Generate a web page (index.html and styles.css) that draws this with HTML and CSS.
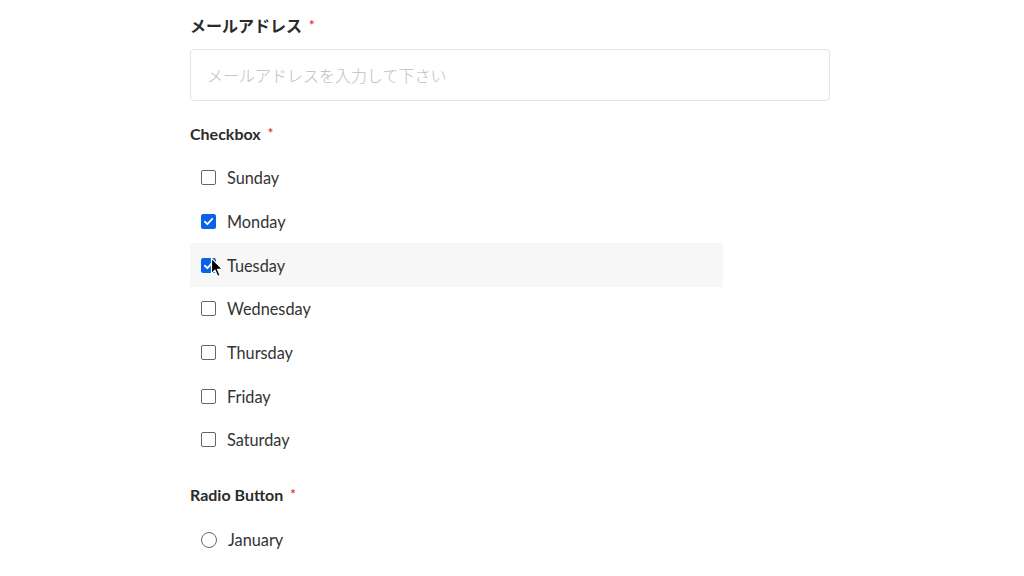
FILE: index.html
```html
<!DOCTYPE html>
<html lang="ja">
<head>
    <meta charset="UTF-8">
    <meta name="viewport" content="width=device-width, initial-scale=1.0">
    <title>Form</title>
    <link rel="stylesheet" href="styles.css">
</head>
<body>
    <form class="form">
        <div class="field field-email">
            <label class="field-label" for="email">メールアドレス<span class="req">*</span></label>
            <input class="text-input" id="email" type="email" placeholder="メールアドレスを入力して下さい">
        </div>

        <div class="field">
            <div class="field-label">Checkbox<span class="req">*</span></div>
            <div class="options">
                <label class="option"><input type="checkbox" class="box"> Sunday</label>
                <label class="option"><input type="checkbox" class="box" checked> Monday</label>
                <label class="option hover">
                    <input type="checkbox" class="box" checked> Tuesday
                    <svg class="cursor" width="14" height="21" viewBox="0 0 12 19">
                        <path d="M1 1 L1 15 L4.2 12 L6.6 17.6 L8.8 16.6 L6.5 11.2 L11 11.2 Z" fill="#000" stroke="#fff" stroke-width="1.1" stroke-linejoin="round"/>
                    </svg>
                </label>
                <label class="option"><input type="checkbox" class="box"> Wednesday</label>
                <label class="option"><input type="checkbox" class="box"> Thursday</label>
                <label class="option"><input type="checkbox" class="box"> Friday</label>
                <label class="option"><input type="checkbox" class="box"> Saturday</label>
            </div>
        </div>

        <div class="field">
            <div class="field-label">Radio Button<span class="req">*</span></div>
            <div class="options options-radio">
                <label class="option"><input type="radio" name="month" class="radio"> January</label>
            </div>
        </div>
    </form>
</body>
</html>
```

FILE: styles.css
```css
body {
    margin: 0;
    background: #fff;
    font-family: Lato, "Noto Sans CJK JP", sans-serif;
    color: #333;
}
.form {
    width: 640px;
    margin-left: 190px;
    padding-top: 15px;
}
.field {
    margin-bottom: 22px;
}
.field-label {
    display: block;
    font-size: 16px;
    line-height: 20px;
    font-weight: 700;
    color: #2b2b2b;
}
.req {
    color: #e5383b;
    font-size: 13px;
    margin-left: 7px;
    vertical-align: 2px;
}
.text-input {
    display: block;
    box-sizing: border-box;
    width: 640px;
    height: 52px;
    margin-top: 13px;
    padding: 0 16px;
    border: 1px solid #e3e3e3;
    border-radius: 4px;
    font-family: "Noto Sans CJK JP", sans-serif;
    font-size: 16px;
    font-weight: 300;
    color: #333;
    outline: none;
}
.text-input::placeholder {
    color: #bdbdbd;
}
.options {
    margin-top: 12px;
}
.options-radio {
    margin-top: 13px;
}
.option {
    position: relative;
    display: flex;
    align-items: center;
    gap: 11px;
    width: 533px;
    height: 43.7px;
    padding-left: 11px;
    box-sizing: border-box;
    font-size: 16.3px;
    color: #333;
}
.option.hover {
    background: #f7f7f7;
}
.box, .radio {
    appearance: none;
    margin: 0;
    width: 15px;
    height: 15px;
    border: 1.5px solid #666;
    background: #fff;
    box-sizing: border-box;
}
.box {
    border-radius: 2px;
}
.box:checked {
    border-color: #0a62e8;
    background: #0a62e8 url("data:image/svg+xml,%3Csvg xmlns='http://www.w3.org/2000/svg' viewBox='0 0 16 16'%3E%3Cpath d='M3.5 8.3 L6.6 11.3 L12.6 4.8' fill='none' stroke='%23fff' stroke-width='2.2' stroke-linecap='round' stroke-linejoin='round'/%3E%3C/svg%3E") center / 13px no-repeat;
}
.radio {
    width: 16px;
    height: 16px;
    border-radius: 50%;
}
.cursor {
    position: absolute;
    left: 20px;
    top: 14px;
}
```
